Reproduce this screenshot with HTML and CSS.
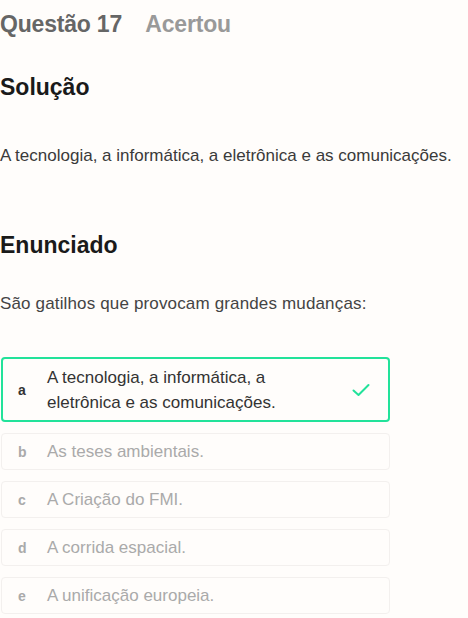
FILE: index.html
```html
<!DOCTYPE html>
<html lang="pt-BR">
<head>
  <meta charset="UTF-8">
  <meta name="viewport" content="width=device-width, initial-scale=1">
  <title>Questão 17</title>
  <link rel="stylesheet" href="styles.css">
</head>
<body>

  <div class="page">
    <div class="header">
      <span class="question-number">Questão 17</span>
      <span class="status">Acertou</span>
    </div>

    <h2 class="section-title">Solução</h2>
    <p class="solution-text">A tecnologia, a informática, a eletrônica e as comunicações.</p>

    <h2 class="section-title statement-title">Enunciado</h2>
    <p class="statement">São gatilhos que provocam grandes mudanças:</p>

    <div class="options">
      <div class="option correct">
        <span class="letter">a</span>
        <span class="option-text">A tecnologia, a informática, a eletrônica e as comunicações.</span>
        <svg class="check" width="18" height="14" viewBox="0 0 18 14" fill="none">
          <path d="M1.5 7.5 L6.5 12 L16.5 2" stroke="#22e29a" stroke-width="2" stroke-linecap="round" stroke-linejoin="round"/>
        </svg>
      </div>
      <div class="option">
        <span class="letter">b</span>
        <span class="option-text">As teses ambientais.</span>
      </div>
      <div class="option">
        <span class="letter">c</span>
        <span class="option-text">A Criação do FMI.</span>
      </div>
      <div class="option">
        <span class="letter">d</span>
        <span class="option-text">A corrida espacial.</span>
      </div>
      <div class="option">
        <span class="letter">e</span>
        <span class="option-text">A unificação europeia.</span>
      </div>
    </div>
  </div>

</body>
</html>
```

FILE: styles.css
```css
* {
  box-sizing: border-box;
}

body {
  margin: 0;
  background-color: #fffdfb;
  font-family: "Liberation Sans", Arial, sans-serif;
  color: #333333;
}

.page {
  padding-left: 1px;
}

.header {
  height: 48px;
  line-height: 48px;
  font-size: 23px;
  font-weight: bold;
  margin-left: -1px;
  letter-spacing: -0.2px;
}

.question-number {
  color: #666666;
  margin-right: 18px;
}

.status {
  color: #999999;
}

.section-title {
  margin: 24px 0 0 -1px;
  font-size: 23px;
  line-height: 30px;
  color: #1a1a1a;
}

.solution-text {
  margin: 42px 0 0 -1px;
  font-size: 17px;
  line-height: 24px;
  color: #3a3a3a;
}

.statement-title {
  margin-top: 62px;
}

.statement {
  margin: 32px 0 0 -1px;
  font-size: 17px;
  line-height: 24px;
  color: #444444;
  letter-spacing: 0.15px;
}

.options {
  margin-top: 41px;
  display: flex;
  flex-direction: column;
  gap: 11px;
  width: 389px;
}

.option {
  display: flex;
  align-items: center;
  border: 1px solid #f3f0ee;
  border-radius: 4px;
  padding: 6px 18px 5px 16px;
  font-size: 17px;
  line-height: 24px;
  color: #aaaaaa;
}

.option.correct {
  border: 2px solid #22e29a;
  padding: 6px 18px 5px 15px;
  line-height: 25px;
  color: #333333;
}

.letter {
  width: 29px;
  flex-shrink: 0;
  font-size: 14px;
  font-weight: bold;
}

.option-text {
  flex: 1;
  padding-right: 40px;
}

.check {
  flex-shrink: 0;
}
```
